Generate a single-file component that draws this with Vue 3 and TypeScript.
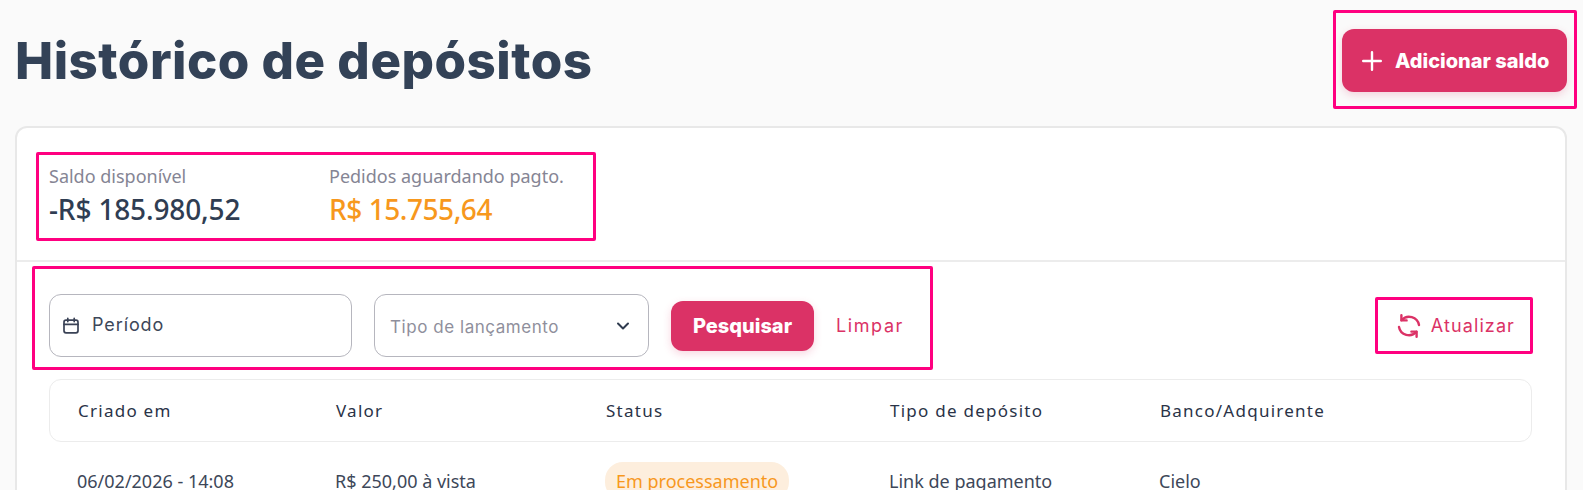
<script setup lang="ts">
interface Column { key: string; label: string }
const columns: Column[] = [
  { key: 'date', label: 'Criado em' },
  { key: 'value', label: 'Valor' },
  { key: 'status', label: 'Status' },
  { key: 'type', label: 'Tipo de depósito' },
  { key: 'bank', label: 'Banco/Adquirente' },
]
</script>

<template>
  <div class="page">
    <header class="top">
      <h1 class="title">Histórico de depósitos</h1>
      <button class="add">
        <svg width="20" height="20" viewBox="0 0 20 20" fill="none" stroke="#fff" stroke-width="2.4" stroke-linecap="round"><path d="M10 1.2v17.6M1.2 10h17.6"/></svg>
        <span>Adicionar saldo</span>
      </button>
    </header>

    <section class="card">
      <div class="stats">
        <div class="stat">
          <div class="label">Saldo disponível</div>
          <div class="amount">-R$ 185.980,52</div>
        </div>
        <div class="stat">
          <div class="label">Pedidos aguardando pagto.</div>
          <div class="amount orange">R$ 15.755,64</div>
        </div>
      </div>

      <div class="filters">
        <div class="field period">
          <svg width="18" height="18" viewBox="0 0 18 18" fill="none" stroke="#3a4256" stroke-width="1.7" stroke-linecap="round" stroke-linejoin="round"><rect x="2" y="3.2" width="14" height="12.6" rx="2"/><path d="M2 7.4h14M5.8 1.4v3.2M12.2 1.4v3.2"/></svg>
          <span>Período</span>
        </div>
        <div class="field type">
          <span>Tipo de lançamento</span>
          <svg width="16" height="16" viewBox="0 0 16 16" fill="none" stroke="#2f3b4f" stroke-width="2" stroke-linecap="round" stroke-linejoin="round"><path d="M3 5.5 8 10.5 13 5.5"/></svg>
        </div>
        <button class="search">Pesquisar</button>
        <span class="clear">Limpar</span>
        <div class="refresh">
          <svg width="26" height="26" viewBox="0 0 26 26" fill="none" stroke="#db3266" stroke-width="2.4" stroke-linecap="round" stroke-linejoin="round">
            <path d="M5.6 7.2A10 10 0 0 1 23 12M20.4 18.8A10 10 0 0 1 3 14"/>
            <path d="M5.4 2.2v5.2h5.2M20.6 23.8v-5.2h-5.2"/>
          </svg>
          <span>Atualizar</span>
        </div>
      </div>

      <div class="table-head">
        <div v-for="c in columns" :key="c.key">{{ c.label }}</div>
      </div>
      <div class="table-row">
        <div>06/02/2026 - 14:08</div>
        <div>R$ 250,00 à vista</div>
        <div class="status-cell"><span class="badge">Em processamento</span></div>
        <div>Link de pagamento</div>
        <div>Cielo</div>
      </div>
    </section>

    <div class="mark mark-add"></div>
    <div class="mark mark-stats"></div>
    <div class="mark mark-filters"></div>
    <div class="mark mark-refresh"></div>
  </div>
</template>

<style>
html, body { margin: 0; background: #fafafa; overflow: hidden; }
</style>

<style scoped>
.page {
  position: relative;
  height: 490px;
  padding: 0 16px 0 15px;
  overflow: hidden;
  background: #fafafa;
  font-family: "Noto Sans", "Open Sans", sans-serif;
  color: #333f52;
}
.top {
  display: flex;
  align-items: flex-start;
  justify-content: space-between;
  height: 126px;
  padding-top: 29px;
  box-sizing: border-box;
}
.title {
  margin: 1px 0 0;
  font-family: Inter, sans-serif;
  font-weight: 800;
  font-size: 51px;
  line-height: 62px;
  letter-spacing: 0.5px;
  color: #334257;
}
.add {
  display: flex;
  align-items: center;
  gap: 13px;
  width: 225px;
  height: 63px;
  padding: 0 0 0 20px;
  border: 0;
  border-radius: 12px;
  background: #db3266;
  box-shadow: 0 3px 8px rgba(219, 50, 102, 0.2);
  color: #fff;
  font-family: Inter, sans-serif;
  font-weight: 800;
  font-size: 20px;
}
.card {
  height: 400px;
  box-sizing: border-box;
  border: 2px solid #e8e8e8;
  border-radius: 12px;
  background: #fff;
}
.stats {
  display: flex;
  height: 134px;
  box-sizing: border-box;
  padding: 36px 32px 0;
  border-bottom: 2px solid #ececec;
}
.stat { width: 280px; }
.label { font-size: 18px; line-height: 24px; color: #858594; }
.amount { margin-top: 2px; font-size: 28px; line-height: 38px; font-weight: 500; letter-spacing: -0.15px; color: #2f3d52; }
.orange { letter-spacing: -0.45px; color: #f7981d; }
.filters {
  display: flex;
  align-items: center;
  height: 117px;
  padding: 10px 50px 0 32px;
  box-sizing: border-box;
}
.field {
  display: flex;
  align-items: center;
  height: 63px;
  box-sizing: border-box;
  border: 1px solid #b6b6be;
  border-radius: 12px;
  font-family: Inter, sans-serif;
}
.period {
  width: 303px;
  padding: 0 0 0 12px;
  gap: 12px;
  margin-right: 22px;
  font-size: 18px;
  letter-spacing: 0.9px;
  color: #3d4759;
}
.period span { padding-bottom: 2px; }
.type {
  width: 275px;
  padding: 0 17px 0 15px;
  justify-content: space-between;
  font-size: 17px;
  letter-spacing: 0.55px;
  color: #8f8f9c;
}
.type span { padding-top: 3px; }
.search {
  width: 143px;
  height: 50px;
  margin-left: 22px;
  border: 0;
  border-radius: 12px;
  background: #db3266;
  box-shadow: 0 3px 8px rgba(219, 50, 102, 0.2);
  color: #fff;
  font-family: Inter, sans-serif;
  font-weight: 800;
  font-size: 20px;
}
.clear {
  margin-left: 22px;
  font-family: Inter, sans-serif;
  font-size: 18px;
  letter-spacing: 1.6px;
  color: #db3266;
}
.refresh {
  display: flex;
  align-items: center;
  gap: 9px;
  margin-left: auto;
  font-family: Inter, sans-serif;
  font-size: 18px;
  letter-spacing: 1.1px;
  color: #db3266;
}
.table-head, .table-row {
  display: grid;
  grid-template-columns: 258px 270px 284px 270px 1fr;
  margin: 0 33px 0 32px;
  padding: 0 28px;
  align-items: center;
}
.table-head {
  height: 63px;
  box-sizing: border-box;
  border: 1px solid #ececec;
  border-radius: 12px;
  font-size: 17px;
  letter-spacing: 1.25px;
  color: #2a3347;
}
.table-row {
  padding-top: 20px;
  font-size: 18px;
  line-height: 38px;
  color: #3d4759;
}
.badge {
  display: inline-block;
  padding: 0 11px;
  border-radius: 18px;
  background: #fdeedd;
  color: #f7981d;
}
.mark {
  position: absolute;
  box-sizing: border-box;
  border: 3px solid #ff0080;
  border-radius: 2px;
  pointer-events: none;
}
.mark-add { left: 1333px; top: 10px; width: 244px; height: 99px; }
.mark-stats { left: 36px; top: 152px; width: 560px; height: 89px; }
.mark-filters { left: 32px; top: 266px; width: 901px; height: 104px; }
.mark-refresh { left: 1375px; top: 297px; width: 158px; height: 57px; }
</style>
